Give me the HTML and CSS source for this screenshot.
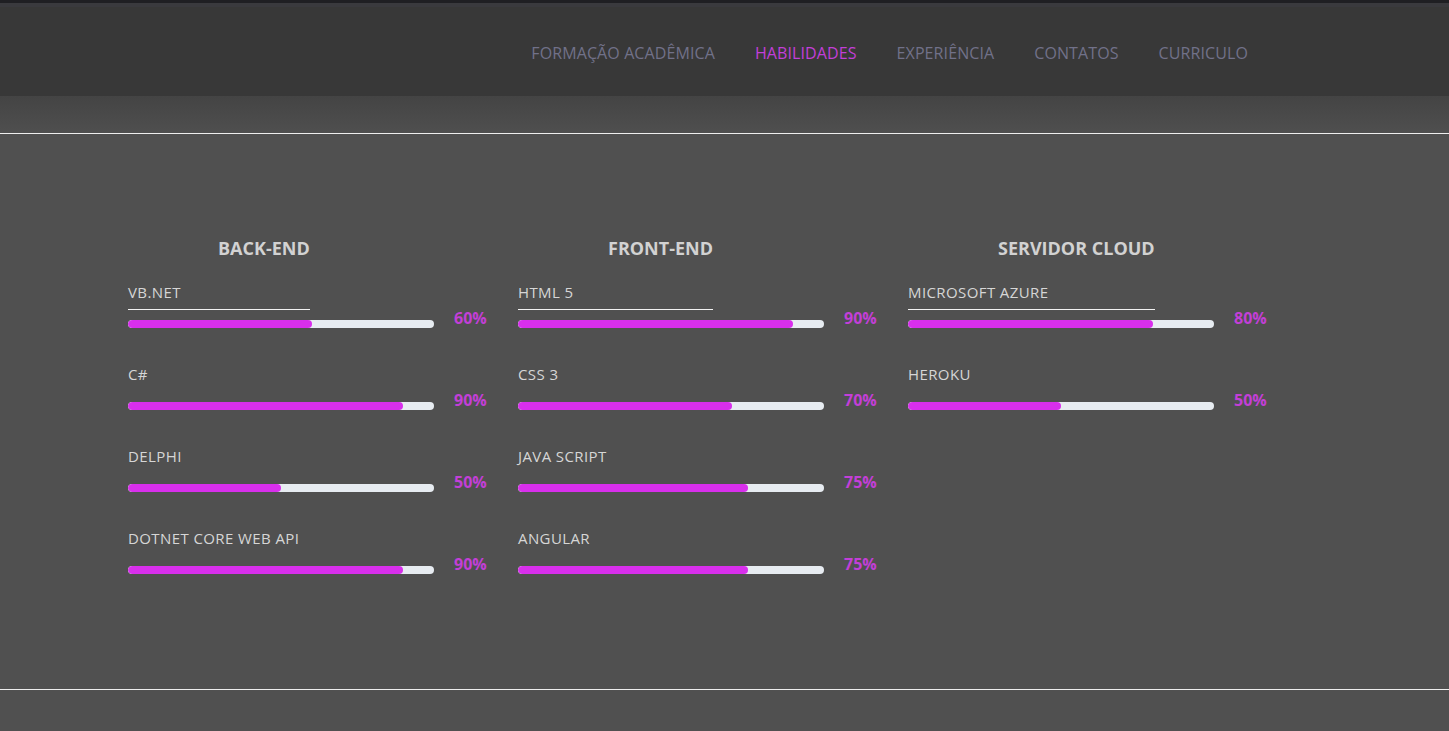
FILE: index.html
```html
<!DOCTYPE html>
<html lang="pt-BR">
<head>
<meta charset="utf-8">
<title>Habilidades</title>
<link rel="stylesheet" href="styles.css">
</head>
<body>
<div class="topbar"></div>
<header class="header">
  <nav class="nav">
    <a class="nav-link" href="#">FORMAÇÃO ACADÊMICA</a>
    <a class="nav-link active" href="#">HABILIDADES</a>
    <a class="nav-link" href="#">EXPERIÊNCIA</a>
    <a class="nav-link" href="#">CONTATOS</a>
    <a class="nav-link" href="#">CURRICULO</a>
  </nav>
</header>
<div class="gap-area"></div>
<section class="skills">
  <div class="columns">
    <div class="col">
      <div class="col-top">
        <h3 class="col-title">BACK-END</h3>
        <div class="label first">VB.NET</div>
      </div>
      <div class="meter-row"><div class="bar"><div class="fill" style="width:60%"></div></div><span class="pct">60%</span></div>
      <div class="label">C#</div>
      <div class="meter-row"><div class="bar"><div class="fill" style="width:90%"></div></div><span class="pct">90%</span></div>
      <div class="label">DELPHI</div>
      <div class="meter-row"><div class="bar"><div class="fill" style="width:50%"></div></div><span class="pct">50%</span></div>
      <div class="label">DOTNET CORE WEB API</div>
      <div class="meter-row"><div class="bar"><div class="fill" style="width:90%"></div></div><span class="pct">90%</span></div>
    </div>
    <div class="col">
      <div class="col-top">
        <h3 class="col-title">FRONT-END</h3>
        <div class="label first">HTML 5</div>
      </div>
      <div class="meter-row"><div class="bar"><div class="fill" style="width:90%"></div></div><span class="pct">90%</span></div>
      <div class="label">CSS 3</div>
      <div class="meter-row"><div class="bar"><div class="fill" style="width:70%"></div></div><span class="pct">70%</span></div>
      <div class="label">JAVA SCRIPT</div>
      <div class="meter-row"><div class="bar"><div class="fill" style="width:75%"></div></div><span class="pct">75%</span></div>
      <div class="label">ANGULAR</div>
      <div class="meter-row"><div class="bar"><div class="fill" style="width:75%"></div></div><span class="pct">75%</span></div>
    </div>
    <div class="col">
      <div class="col-top">
        <h3 class="col-title">SERVIDOR CLOUD</h3>
        <div class="label first">MICROSOFT AZURE</div>
      </div>
      <div class="meter-row"><div class="bar"><div class="fill" style="width:80%"></div></div><span class="pct">80%</span></div>
      <div class="label">HEROKU</div>
      <div class="meter-row"><div class="bar"><div class="fill" style="width:50%"></div></div><span class="pct">50%</span></div>
    </div>
  </div>
</section>
<div class="bottom-area"></div>
</body>
</html>
```

FILE: styles.css
```css
* { box-sizing: border-box; }
html, body {
  margin: 0;
  padding: 0;
  background: #505050;
  font-family: "Open Sans", "Noto Sans", sans-serif;
  overflow: hidden;
}
.topbar {
  height: 7px;
  background: linear-gradient(#1f1f23 0, #1f1f23 3px, #3a3a3e 3px, #3a3a3e 7px);
}
.header {
  height: 89px;
  background: #383838;
  display: flex;
  align-items: center;
  justify-content: flex-end;
  padding-right: 201px;
  padding-top: 2px;
}
.nav {
  display: flex;
  gap: 40px;
}
.nav-link {
  color: #717189;
  text-decoration: none;
  font-size: 16px;
  letter-spacing: 0.1px;
  line-height: 20px;
}
.nav-link.active { color: #c23fd9; }
.gap-area {
  height: 38px;
  background: linear-gradient(#444444, #4f4f4f);
  border-bottom: 1px solid #eeeeee;
}
.skills {
  height: 556px;
  border-bottom: 1px solid #eeeeee;
  padding: 102px 0 0 128px;
}
.columns {
  display: grid;
  grid-template-columns: 390px 390px 390px;
}
.col {
  display: flex;
  flex-direction: column;
  align-items: flex-start;
}
.col-top {
  display: flex;
  flex-direction: column;
}
.col-title {
  margin: 0;
  padding-left: 90px;
  color: #d2d2d2;
  font-size: 18px;
  font-weight: 700;
  line-height: 24px;
}
.label {
  color: #d6d6d6;
  font-size: 15px;
  letter-spacing: 0.4px;
  line-height: 20px;
  margin-top: 31px;
}
.label.first {
  margin-top: 22px;
  padding-bottom: 7px;
  border-bottom: 1px solid #f2f2f2;
}
.meter-row {
  display: flex;
  align-items: center;
  gap: 20px;
  margin-top: 13px;
  height: 18px;
}
.col-top + .meter-row { margin-top: 5px; }
.bar {
  width: 306px;
  height: 8px;
  background: #e7ecf1;
  border-radius: 4px;
  overflow: hidden;
}
.fill {
  height: 100%;
  background: #d82fec;
  border-radius: 4px;
}
.pct {
  color: #c33fd8;
  font-size: 16px;
  font-weight: 700;
  line-height: 18px;
  margin-bottom: 12px;
}
.bottom-area { height: 41px; }
```
